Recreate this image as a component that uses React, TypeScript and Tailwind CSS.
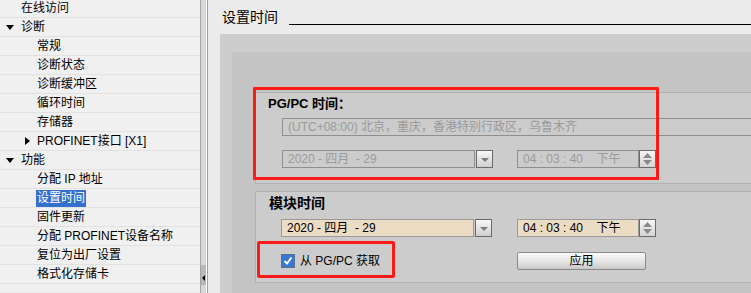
import React from "react";

const font = { fontFamily: '"Liberation Sans", "Noto Sans CJK SC", sans-serif' };

type NavItem = { label: string; level: 0 | 1; arrow?: "down" | "right"; selected?: boolean };

const nav: NavItem[] = [
  { label: "在线访问", level: 0 },
  { label: "诊断", level: 0, arrow: "down" },
  { label: "常规", level: 1 },
  { label: "诊断状态", level: 1 },
  { label: "诊断缓冲区", level: 1 },
  { label: "循环时间", level: 1 },
  { label: "存储器", level: 1 },
  { label: "PROFINET接口 [X1]", level: 1, arrow: "right" },
  { label: "功能", level: 0, arrow: "down" },
  { label: "分配 IP 地址", level: 1 },
  { label: "设置时间", level: 1, selected: true },
  { label: "固件更新", level: 1 },
  { label: "分配 PROFINET设备名称", level: 1 },
  { label: "复位为出厂设置", level: 1 },
  { label: "格式化存储卡", level: 1 },
];

function DownTri({ color = "#000" }: { color?: string }) {
  return (
    <svg width="8" height="5" viewBox="0 0 8 5">
      <path d="M0 0 L8 0 L4 5 Z" fill={color} />
    </svg>
  );
}

function RightTri() {
  return (
    <svg width="5" height="8" viewBox="0 0 5 8">
      <path d="M0 0 L5 4 L0 8 Z" fill="#000" />
    </svg>
  );
}

function DropBtn() {
  return (
    <div className="w-[17px] h-[18px] ml-[1px] border border-[#6a6a6a] bg-gradient-to-b from-[#f8f8f8] to-[#cfcfcf] flex items-center justify-center">
      <svg width="8" height="5" viewBox="0 0 8 5" className="mt-[3px]">
        <path d="M0 0 L8 0 L4 4 Z" fill="#7a7a7a" />
      </svg>
    </div>
  );
}

function Spinner() {
  return (
    <div className="w-[17px] h-[18px] border border-[#6a6a6a] bg-gradient-to-b from-[#f6f6f6] to-[#d4d4d4] flex flex-col items-center justify-center gap-[2px]">
      <svg width="9" height="5" viewBox="0 0 9 5">
        <path d="M0 5 L9 5 L4.5 0 Z" fill="#8a8a8a" />
      </svg>
      <svg width="9" height="5" viewBox="0 0 9 5">
        <path d="M0 0 L9 0 L4.5 5 Z" fill="#8a8a8a" />
      </svg>
    </div>
  );
}

function DateTimeRow({ enabled, ml }: { enabled: boolean; ml: string }) {
  const boxBg = enabled ? "bg-[#ecdcc4]" : "bg-[#cccccc]";
  const txt = enabled ? "text-[#000]" : "text-[#9a9a9a]";
  const border = enabled ? "border-[#9a9a9a]" : "border-[#8f8f8f]";
  return (
    <div className="flex items-center h-[18px]">
      <div className={`w-[193px] h-[18px] border ${border} ${boxBg} ${txt} text-[12px] leading-[16px] pl-[5px] whitespace-pre`}>
        {"2020 - 四月  - 29"}
      </div>
      <DropBtn />
      <div className={`${ml} w-[122px] h-[18px] border ${border} ${boxBg} ${txt} text-[12px] leading-[16px] pl-[5px] whitespace-pre`}>
        {"04 : 03 : 40    下午"}
      </div>
      <Spinner />
    </div>
  );
}

export default function App() {
  return (
    <div className="relative w-[751px] h-[293px] overflow-hidden flex bg-[#ebebeb] text-black" style={font}>
      {/* left nav */}
      <div className="w-[200px] h-full bg-[#f0f0f0] flex flex-col mt-[-1px]">
        {nav.map((n, i) => (
          <div key={i} className="h-[19px] shrink-0 border-b border-[#e2e2e2] flex items-center text-[12px] leading-[14px]">
            <div className={`${n.level === 0 ? "w-[21px]" : "w-[37px]"} flex items-center shrink-0`}>
              {n.arrow === "down" && (
                <span className="ml-[6px] flex">
                  <DownTri />
                </span>
              )}
              {n.arrow === "right" && (
                <span className="ml-[25px] flex">
                  <RightTri />
                </span>
              )}
            </div>
            <span
              className={`whitespace-pre ${n.selected ? "bg-[#3470d0] text-white px-[1px] -ml-[1px] leading-[17px]" : ""}`}
            >
              {n.label}
            </span>
          </div>
        ))}
      </div>

      {/* splitter / scrollbar */}
      <div className="w-[8px] h-full flex">
        <div className="w-[1px] bg-[#a4a4a4]" />
        <div className="w-[5px] bg-[#d8d8d8] flex flex-col">
          <div className="flex-1" />
          <div className="h-[20px] mb-[8px] bg-[#b9b9b9] flex items-center justify-center pt-[6px]">
            <svg width="3" height="6" viewBox="0 0 3 6">
              <path d="M3 0 L0 3 L3 6 Z" fill="#000" />
            </svg>
          </div>
        </div>
        <div className="w-[1px] bg-white" />
        <div className="w-[1px] bg-[#a0a0a0]" />
      </div>

      {/* main */}
      <div className="flex-1 h-full flex flex-col">
        <div className="h-[34px] pt-[8px] pl-[14px] flex items-start shrink-0">
          <span className="text-[14px] leading-[18px] whitespace-pre">设置时间</span>
          <div className="flex-1 h-[17px] border-b border-black ml-[11px]" />
        </div>
        <div className="flex-1 ml-[12px] bg-[#cdcdcd] pt-[18px] pl-[12px] flex flex-col">
          <div className="flex-1 bg-[#c4c4c4] pt-[40px] pl-[23px] flex flex-col gap-[7px]">
            {/* PG/PC group */}
            <div className="h-[92px] border border-r-0 border-[#b2b2b2] bg-[#cccccc] pl-[12px] pt-[3px]">
              <div className="text-[13px] leading-[16px] font-bold">PG/PC 时间：</div>
              <div className="ml-[14px] mt-[6px] h-[18px] border border-r-0 border-[#8f8f8f] text-[12px] leading-[16px] text-[#9a9a9a] pl-[5px] whitespace-pre">
                (UTC+08:00) 北京，重庆，香港特别行政区，乌鲁木齐
              </div>
              <div className="ml-[14px] mt-[14px]">
                <DateTimeRow enabled={false} ml="ml-[24px]" />
              </div>
            </div>
            {/* module group */}
            <div className="h-[92px] border border-r-0 border-[#b2b2b2] bg-[#cccccc] pl-[13px] pt-[3px]">
              <div className="text-[14px] leading-[16px] font-bold">模块时间</div>
              <div className="ml-[12px] mt-[8px]">
                <DateTimeRow enabled ml="ml-[25px]" />
              </div>
              <div className="ml-[12px] mt-[15px] flex items-center h-[18px]">
                <div className="w-[236px] flex items-center">
                  <div className="w-[14px] h-[14px] border border-[#5b6f8e] bg-[#3a77cf] flex items-center justify-center">
                    <svg width="10" height="10" viewBox="0 0 10 10">
                      <path d="M1.5 5 L4 7.5 L8.5 1.5" stroke="#fff" strokeWidth="2" fill="none" />
                    </svg>
                  </div>
                  <span className="ml-[5px] text-[12px] leading-[16px] whitespace-pre">从 PG/PC 获取</span>
                </div>
                <button className="w-[129px] h-[18px] border border-[#8a8a8a] rounded-[2px] bg-gradient-to-b from-[#fafafa] via-[#e6e6e6] to-[#c8c8c8] text-[12px] leading-[14px]">
                  应用
                </button>
              </div>
            </div>
          </div>
        </div>
      </div>

      {/* annotation boxes */}
      <div className="absolute left-[253px] top-[87px] w-[406px] h-[93px] border-[3px] border-[#ff1a1a] rounded-[1px]" />
      <div className="absolute left-[257px] top-[241px] w-[138px] h-[37px] border-[3px] border-[#ff1a1a] rounded-[2px]" />
    </div>
  );
}
